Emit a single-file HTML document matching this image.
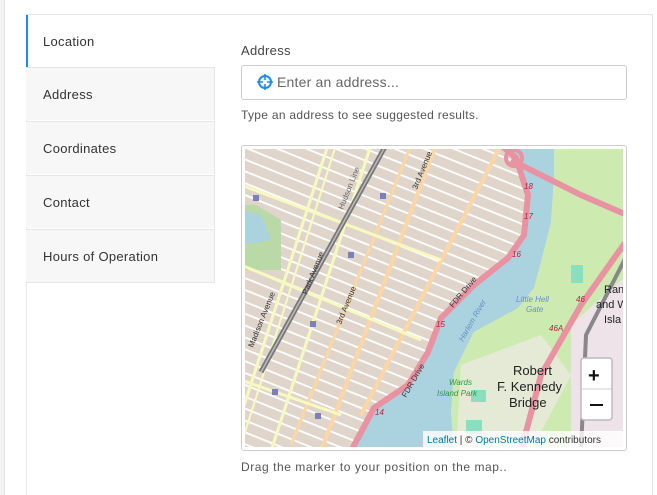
<!DOCTYPE html>
<html><head><meta charset="utf-8"><style>
html{overflow:hidden;height:495px}
body{margin:0;width:657px;height:495px;background:#fff;font-family:"Liberation Sans",sans-serif;position:relative;overflow:hidden}
.strip{position:absolute;left:0;top:0;width:4px;height:495px;background:#f3f3f3;border-right:1px solid #e3e3e3}
.card{position:absolute;left:26px;top:14px;width:627px;height:481px;border:1px solid #e8e8e8;border-bottom:none;border-right:1px solid #e0e0e0;box-sizing:border-box}
.tab{position:absolute;left:26px;width:189px;height:53px;background:#f7f7f7;border-top:1px solid #e6e6e6;border-right:1px solid #e6e6e6;font-size:13px;letter-spacing:0.3px;color:#333;line-height:53px;box-sizing:border-box;padding-left:17px}
.tab.a{background:#fff;border-left:2px solid #1f8ceb;border-right:none;border-top:none;padding-left:15px}
.lbl{position:absolute;left:241px;top:43px;font-size:13px;letter-spacing:0.3px;color:#444}
.inp{position:absolute;left:241px;top:65px;width:384px;height:33px;border:1px solid #ccc;border-radius:3px}
.inp span{position:absolute;left:35px;top:8px;font-size:14px;letter-spacing:0.2px;color:#666}
.help{position:absolute;left:241px;top:108px;font-size:12px;letter-spacing:0.3px;color:#555}
.map{position:absolute;left:241px;top:145px;width:384px;height:304px;border:1px solid #ccc;border-radius:3px;overflow:hidden}
.cap{position:absolute;left:241px;top:460px;font-size:12px;letter-spacing:0.55px;color:#555}
</style></head><body>
<div class="strip"></div>
<div class="card"></div>
<div class="tab a" style="top:15px;height:53px">Location</div>
<div class="tab" style="top:67px">Address</div>
<div class="tab" style="top:121px">Coordinates</div>
<div class="tab" style="top:175px">Contact</div>
<div class="tab" style="top:229px;height:54px;border-bottom:1px solid #e6e6e6">Hours of Operation</div>
<div class="lbl">Address</div>
<div class="inp"><svg style="position:absolute;left:15px;top:8px" width="16" height="16" viewBox="0 0 16 16"><circle cx="8" cy="8" r="6" fill="none" stroke="#1f8ceb" stroke-width="2"/><path d="M8 0v16M0 8h16" stroke="#1f8ceb" stroke-width="1.6"/><circle cx="8" cy="8" r="2" fill="#fff"/></svg><span>Enter an address...</span></div>
<div class="help">Type an address to see suggested results.</div>
<div class="map">
<svg width="386" height="306" viewBox="0 0 386 306" style="position:absolute;left:-1px;top:-1px">
<defs><pattern id="st" width="300" height="11" patternUnits="userSpaceOnUse" patternTransform="rotate(22)"><rect width="300" height="11" fill="#e0d5cb"/><rect y="0" width="300" height="1.8" fill="#fff"/></pattern>
<clipPath id="c"><rect x="4" y="4" width="378" height="298"/></clipPath></defs>
<rect width="386" height="306" fill="#fff"/>
<g clip-path="url(#c)">
<rect width="386" height="306" fill="url(#st)"/>
<path d="M0 60 L15 60 L40 75 L40 125 L0 125Z" fill="#b9d9a6"/>
<path d="M0 65 L20 70 L30 95 L0 100Z" fill="#aad3df"/>
<g stroke-width="3" fill="none">
<path d="M0 270 L87 0" stroke="#f7fabf"/>
<path d="M30 306 L130 0" stroke="#f7fabf"/>
<path d="M80 306 L195 0" stroke="#fcd6a4" stroke-width="4"/>
<path d="M50 300 L170 0" stroke="#fcd6a4" stroke-width="3"/>
<path d="M120 270 L260 0" stroke="#fcd6a4" stroke-width="4"/>
<path d="M0 40 L200 115" stroke="#f7fabf"/>
<path d="M0 120 L180 195" stroke="#f7fabf"/>
<path d="M0 235 L100 270" stroke="#f7fabf"/>
<path d="M0 300 L95 0" stroke="#f7fabf" stroke-width="2"/>
<path d="M20 227 L145 0" stroke="#777" stroke-width="5"/>
<path d="M20 227 L145 0" stroke="#bbb" stroke-width="1.5"/>
</g>
<path d="M267 0 L313 0 L313 33 L310 77 L300 117 L293 143 L277 163 L233 187 L213 227 L210 267 L213 306 L110 306 L133 263 L167 240 L187 207 L200 173 L233 140 L267 113 L283 90 L287 50Z" fill="#aad3df"/>
<path d="M313 0 L386 0 L386 306 L213 306 L210 267 L213 227 L233 187 L277 163 L293 143 L300 117 L310 77 L313 33Z" fill="#cdebb0"/>
<path d="M330 180 L386 130 L386 306 L330 306Z" fill="#ede3e8"/>
<path d="M220 220 L300 190 L330 230 L290 306 L215 306Z" fill="#e4ead6"/>
<rect x="330" y="120" width="12" height="18" fill="#88e0be"/>
<rect x="230" y="245" width="15" height="12" fill="#88e0be"/>
<rect x="225" y="275" width="16" height="14" fill="#88e0be"/>
<path d="M260 0 L275 13 L287 50 L283 90 L267 113 L233 140 L200 173 L187 207 L167 240 L133 263 L110 306" fill="none" stroke="#e892a2" stroke-width="6"/>
<path d="M270 15 L340 50 L386 70" fill="none" stroke="#e892a2" stroke-width="6"/>
<path d="M386 95 L340 160 L300 230 L280 306" fill="none" stroke="#e892a2" stroke-width="6"/>
<circle cx="273" cy="13" r="8" fill="none" stroke="#e892a2" stroke-width="4"/>
<path d="M386 110 L345 190 L340 306" fill="none" stroke="#888" stroke-width="4"/>
<g font-family="Liberation Sans,sans-serif" font-size="8" fill="#333">
<text x="272" y="230" font-size="13" fill="#222">Robert</text>
<text x="256" y="246" font-size="13" fill="#222">F. Kennedy</text>
<text x="268" y="262" font-size="13" fill="#222">Bridge</text>
<text x="208" y="240" font-style="italic" fill="#2a9a3a">Wards</text>
<text x="196" y="251" font-style="italic" fill="#2a9a3a">Island Park</text>
<text x="275" y="157" font-style="italic" fill="#6a8fc4">Little Hell</text>
<text x="285" y="167" font-style="italic" fill="#6a8fc4">Gate</text>
<text transform="translate(222 197) rotate(-60)" font-style="italic" fill="#6a8fc4">Harlem River</text>
<text transform="translate(212 163) rotate(-50)">FDR Drive</text>
<text transform="translate(165 253) rotate(-60)">FDR Drive</text>
<text transform="translate(100 180) rotate(-68)">3rd Avenue</text>
<text transform="translate(66 150) rotate(-68)">Park Avenue</text>
<text transform="translate(12 203) rotate(-68)">Madison Avenue</text>
<text transform="translate(176 45) rotate(-68)">3rd Avenue</text>
<text transform="translate(102 65) rotate(-68)" fill="#666">Hudson Line</text>
<text x="363" y="148" fill="#222" font-size="11">Rand</text>
<text x="355" y="163" fill="#222" font-size="11">and W</text>
<text x="363" y="178" fill="#222" font-size="11">Isla</text>
<text x="283" y="44" fill="#b0263a" font-style="italic">18</text>
<text x="283" y="74" fill="#b0263a" font-style="italic">17</text>
<text x="271" y="112" fill="#b0263a" font-style="italic">16</text>
<text x="195" y="182" fill="#b0263a" font-style="italic">15</text>
<text x="134" y="270" fill="#b0263a" font-style="italic">14</text>
<text x="335" y="157" fill="#b0263a" font-style="italic">46</text>
<text x="308" y="186" fill="#b0263a" font-style="italic">46A</text>
</g>
<g fill="#7b81b8"><rect x="12" y="50" width="6" height="6"/><rect x="139" y="48" width="6" height="6"/><rect x="107" y="107" width="6" height="6"/><rect x="69" y="176" width="6" height="6"/><rect x="31" y="244" width="6" height="6"/><rect x="74" y="268" width="6" height="6"/></g>
<rect x="182" y="286" width="200" height="16" fill="rgba(255,255,255,0.8)"/>
<text x="186" y="298" font-family="Liberation Sans,sans-serif" font-size="10" fill="#333"><tspan fill="#0078a8">Leaflet</tspan> | © <tspan fill="#0078a8">OpenStreetMap</tspan> contributors</text>
<rect x="340" y="213" width="31" height="62" rx="3" fill="#fff" stroke="#bbb" stroke-width="1.5"/>
<line x1="341" y1="244" x2="370" y2="244" stroke="#ccc"/>
<text x="347" y="237" font-family="Liberation Sans,sans-serif" font-size="20" font-weight="bold" fill="#111">+</text>
<rect x="349" y="259" width="13" height="2" fill="#111"/>
</g>
</svg>
</div>
<div class="cap">Drag the marker to your position on the map..</div>
</body></html>
